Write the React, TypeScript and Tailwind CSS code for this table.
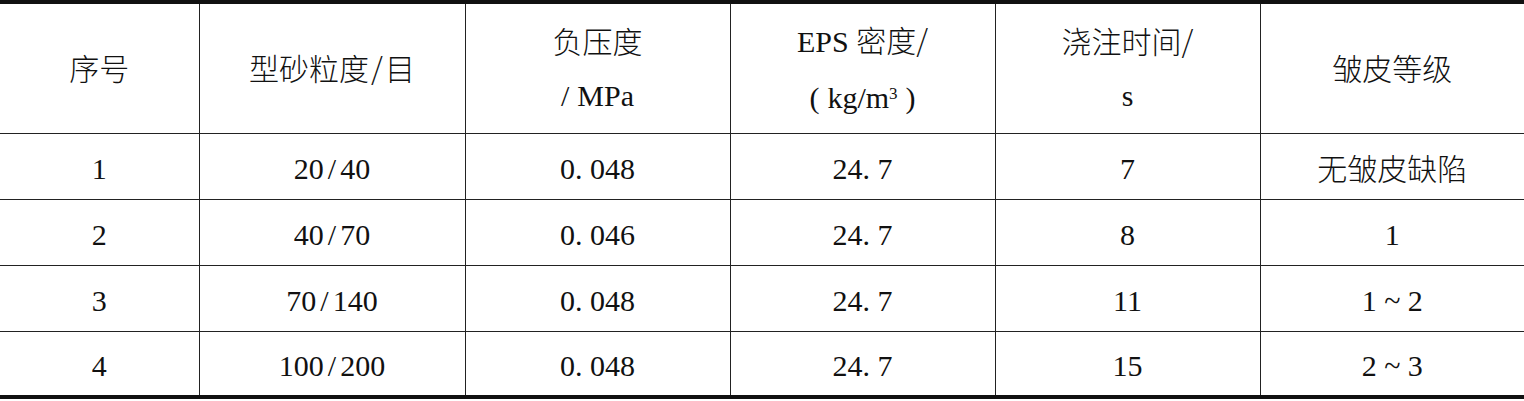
import React from 'react';

// Song-style CJK is not installed, Noto light is the closest stand-in
const Cjk: React.FC<{ children: React.ReactNode }> = ({ children }) => (
  <span className="font-['Noto_Sans_CJK_SC',sans-serif] font-light">{children}</span>
);

const Slash: React.FC = () => <span className="mx-[4px]">/</span>;

const header: React.ReactNode[] = [
  <Cjk>序号</Cjk>,
  <Cjk>型砂粒度<span className="mx-[2px]">/</span>目</Cjk>,
  <div className="flex flex-col items-center leading-[56px]">
    <Cjk>负压度</Cjk>
    <span>
      <span className="mr-[8px]">/</span>MPa
    </span>
  </div>,
  <div className="flex flex-col items-center leading-[56px]">
    <span>
      EPS <Cjk>密度/</Cjk>
    </span>
    <span>
      <span className="mr-[8px]">(</span>kg/m<sup className="text-[17px]">3</sup>
      <span className="ml-[8px]">)</span>
    </span>
  </div>,
  <div className="flex flex-col items-center leading-[56px]">
    <Cjk>浇注时间/</Cjk>
    <span>s</span>
  </div>,
  <Cjk>皱皮等级</Cjk>,
];

const rows: { no: string; sand: [string, string]; pressure: string; density: string; time: string; grade: React.ReactNode }[] = [
  { no: '1', sand: ['20', '40'], pressure: '0. 048', density: '24. 7', time: '7', grade: <Cjk>无皱皮缺陷</Cjk> },
  { no: '2', sand: ['40', '70'], pressure: '0. 046', density: '24. 7', time: '8', grade: '1' },
  { no: '3', sand: ['70', '140'], pressure: '0. 048', density: '24. 7', time: '11', grade: '1 ~ 2' },
  { no: '4', sand: ['100', '200'], pressure: '0. 048', density: '24. 7', time: '15', grade: '2 ~ 3' },
];

const widths = ['w-[199px]', 'w-[266px]', 'w-[265px]', 'w-[265px]', 'w-[265px]', 'w-[264px]'];

export default function App() {
  return (
    <div className="w-[1524px] h-[401px] bg-white text-[#111] text-[30px] font-['Liberation_Serif',serif]">
      <table className="w-full table-fixed border-collapse border-t-[4px] border-b-[4px] border-[#111]">
        <colgroup>
          {widths.map((w, i) => (
            <col key={i} className={w} />
          ))}
        </colgroup>
        <thead>
          <tr className="h-[131px] border-b border-[#222]">
            {header.map((cell, i) => (
              <th key={i} className={`font-normal text-center align-middle p-0 ${i > 0 ? 'border-l border-[#222]' : ''}`}>
                {cell}
              </th>
            ))}
          </tr>
        </thead>
        <tbody>
          {rows.map((r, idx) => (
            <tr key={r.no} className={`h-[66px] ${idx < rows.length - 1 ? 'border-b border-[#222]' : ''}`}>
              <td className="text-center p-0 pt-[4px]">{r.no}</td>
              <td className="text-center p-0 pt-[4px] border-l border-[#222]">
                {r.sand[0]}
                <Slash />
                {r.sand[1]}
              </td>
              <td className="text-center p-0 pt-[4px] border-l border-[#222]">{r.pressure}</td>
              <td className="text-center p-0 pt-[4px] border-l border-[#222]">{r.density}</td>
              <td className="text-center p-0 pt-[4px] border-l border-[#222]">{r.time}</td>
              <td className="text-center p-0 pt-[4px] border-l border-[#222]">{r.grade}</td>
            </tr>
          ))}
        </tbody>
      </table>
    </div>
  );
}
